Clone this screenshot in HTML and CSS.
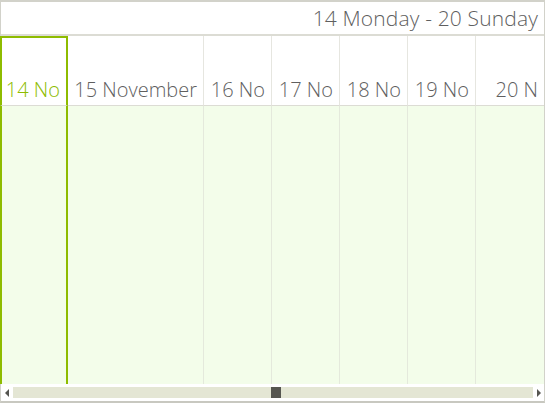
FILE: index.html
```html
<!DOCTYPE html>
<html>
<head>
<meta charset="utf-8">
<link rel="stylesheet" href="styles.css">
</head>
<body>
<div class="scheduler">
  <div class="toolbar"><span class="range">14 Monday - 20 Sunday</span></div>
  <div class="header">
    <div class="hcell selected">14 No</div>
    <div class="hcell">15 November</div>
    <div class="hcell">16 No</div>
    <div class="hcell">17 No</div>
    <div class="hcell">18 No</div>
    <div class="hcell">19 No</div>
    <div class="hcell last">20 N</div>
  </div>
  <div class="content">
    <div class="bcell selected"></div>
    <div class="bcell"></div>
    <div class="bcell"></div>
    <div class="bcell"></div>
    <div class="bcell"></div>
    <div class="bcell"></div>
    <div class="bcell last"></div>
  </div>
  <div class="scrollbar">
    <span class="arrow left"></span>
    <div class="track"><div class="thumb"></div></div>
    <span class="arrow right"></span>
  </div>
</div>
</body>
</html>
```
FILE: styles.css
```css
html, body {
  margin: 0;
  padding: 0;
  background: #ffffff;
}
.scheduler {
  width: 545px;
  height: 403px;
  box-sizing: border-box;
  border: 1px solid #d2d2ca;
  border-top-width: 2px;
  border-bottom-width: 2px;
  border-bottom-color: #c8c8c0;
  display: flex;
  flex-direction: column;
  font-family: "Open Sans", "Noto Sans", sans-serif;
  font-weight: 300;
  color: #5f5f5f;
  background: #ffffff;
}
.toolbar {
  height: 34px;
  box-sizing: border-box;
  border-bottom: 2px solid #dcdcd4;
  display: flex;
  align-items: center;
  justify-content: flex-end;
  padding-right: 6px;
  font-size: 21px;
  line-height: 24px;
  letter-spacing: 0.15px;
}
.header, .content {
  display: grid;
  grid-template-columns: 67px 136px 68px 68px 68px 68px 68px;
}
.header {
  height: 70px;
}
.hcell {
  box-sizing: border-box;
  border-right: 1px solid #e6e6e0;
  border-bottom: 1px solid #dcdcd4;
  display: flex;
  align-items: flex-end;
  justify-content: flex-end;
  padding: 0 6px 3px 0;
  font-size: 20px;
  line-height: 24px;
  white-space: nowrap;
  overflow: hidden;
}
.hcell.selected {
  border-top: 2px solid #8ebc00;
  border-left: 2px solid #8ebc00;
  border-right: 2px solid #8ebc00;
  color: #8ebc00;
  margin-left: -1px;
}
.content {
  flex: 1;
  background: #f3fdea;
}
.bcell {
  box-sizing: border-box;
  border-right: 1px solid #e4e9dc;
}
.bcell.selected {
  border-left: 2px solid #8ebc00;
  border-right: 2px solid #8ebc00;
  margin-left: -1px;
}
.last {
  border-right: none;
}
.scrollbar {
  height: 17px;
  display: flex;
  align-items: center;
  padding: 0 3px 0 3px;
  background: #ffffff;
}
.arrow {
  width: 0;
  height: 0;
  border-top: 4px solid transparent;
  border-bottom: 4px solid transparent;
}
.arrow.left {
  border-right: 4px solid #555550;
  margin: 0 4px 0 1px;
}
.arrow.right {
  border-left: 4px solid #555550;
  margin: 0 0 0 4px;
}
.track {
  flex: 1;
  height: 11px;
  background: #e4e6d4;
  display: flex;
}
.thumb {
  width: 10px;
  height: 11px;
  margin-left: 258px;
  background: #565650;
}
```
